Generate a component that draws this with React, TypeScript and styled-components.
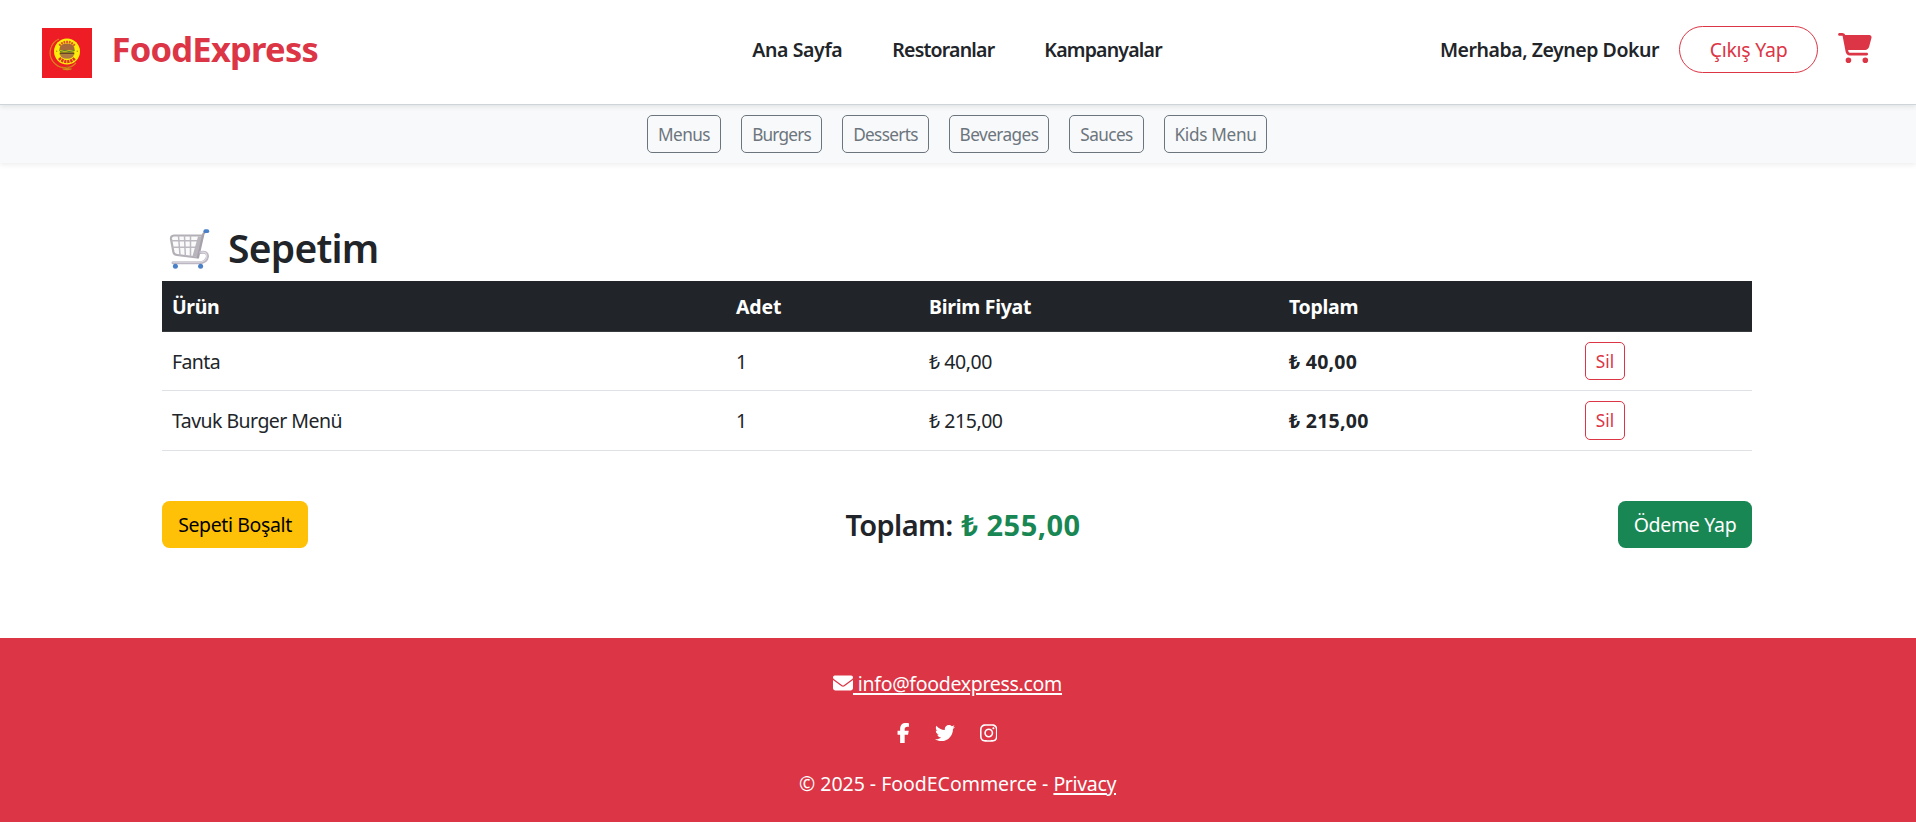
import React from 'react';
import styled, { createGlobalStyle } from 'styled-components';
import { FaCartShopping, FaEnvelope, FaFacebookF, FaInstagram, FaTwitter } from 'react-icons/fa6';

const GlobalStyle = createGlobalStyle`
  *, *::before, *::after { box-sizing: border-box; }
  body {
    margin: 0;
    background: #fff;
    color: #212529;
    font: 400 19.5px/30px "Noto Sans", "Open Sans", sans-serif;
    overflow: hidden;
  }
`;

const Label = styled.span<{ $track?: number; $drop?: number }>`
  display: inline-block;
  margin-top: ${(p) => p.$drop ?? 1}px;
  margin-bottom: ${(p) => -(p.$drop ?? 1)}px;
  letter-spacing: ${(p) => p.$track ?? -0.4}px;
  white-space: pre;
`;

const Header = styled.header`
  position: relative;
  z-index: 2;
  display: flex;
  align-items: center;
  height: 105px;
  padding: 0 44px 5px 42px;
  background: #fff;
  border-bottom: 1px solid #ced4da;
  box-shadow: 0 2px 5px rgba(0, 0, 0, 0.09);
`;

const Brand = styled.a`
  flex: 1 1 0;
  display: flex;
  align-items: center;
  gap: 19.5px;
  color: #dc3545;
  font-size: 34.5px;
  font-weight: 700;
  line-height: 50px;
`;

const BrandLogo = styled.svg`
  width: 50px;
  height: 50px;
  margin-top: 7px;
`;

const Nav = styled.nav`
  display: flex;
  gap: 50px;
  font-weight: 600;
`;

const Account = styled.div`
  flex: 1 1 0;
  display: flex;
  align-items: center;
  justify-content: flex-end;
  gap: 20px;
  font-weight: 600;
`;

const LogoutButton = styled.button`
  width: 139px;
  height: 47px;
  padding: 0;
  border: 1px solid #dc3545;
  border-radius: 25px;
  background: transparent;
  color: #dc3545;
  font: inherit;
  font-weight: 400;
`;

const CartIcon = styled(FaCartShopping)`
  width: 34px;
  height: 30px;
  margin-top: -3px;
  color: #dc3545;
`;

const CategoryBar = styled.div`
  display: flex;
  justify-content: center;
  gap: 20px;
  height: 58px;
  padding: 10px 2px 0 0;
  background: #f8f9fa;
  box-shadow: 0 2px 5px rgba(0, 0, 0, 0.07);
`;

const SmallButton = styled.button<{ $width: number; $danger?: boolean }>`
  width: ${(p) => p.$width}px;
  height: 38.25px;
  padding: 0;
  border: 1px solid ${(p) => (p.$danger ? '#dc3545' : '#6c757d')};
  border-radius: 5px;
  background: transparent;
  color: ${(p) => (p.$danger ? '#dc3545' : '#6c757d')};
  font: inherit;
  font-size: 17.2px;
  line-height: 26px;
`;

const Main = styled.main`
  width: 1592px;
  margin: 0 auto;
  padding: 60px 2px 90px 0;
`;

const Title = styled.h2`
  display: flex;
  align-items: center;
  gap: 17px;
  margin: 0 0 10px;
  padding-left: 5px;
  font-size: 39px;
  font-weight: 560;
  line-height: 48px;
`;

const TitleCart = styled.svg`
  width: 44px;
  height: 42px;
  margin: 5px 0 1px;
`;

const Table = styled.div`
  display: flex;
  flex-direction: column;
`;

const Row = styled.div<{ $head?: boolean }>`
  display: grid;
  grid-template-columns: 564px 193px 360px 296px 177px;
  align-items: center;
  padding: 10px 0;
  border-bottom: 1px solid ${(p) => (p.$head ? '#373b3e' : '#dee2e6')};
  ${(p) => p.$head && 'background: #212529; color: #fff; font-weight: 700;'}
`;

const Cell = styled.div<{ $strong?: boolean }>`
  display: flex;
  padding: 0 10px;
  ${(p) => p.$strong && 'font-weight: 700;'}
`;

const Summary = styled.div`
  display: flex;
  justify-content: space-between;
  align-items: center;
  margin-top: 50px;
`;

const ActionButton = styled.button<{ $width: number; $tone: 'warning' | 'success' }>`
  width: ${(p) => p.$width}px;
  height: 47px;
  padding: 0;
  border: 0;
  border-radius: 7.5px;
  background: ${(p) => (p.$tone === 'warning' ? '#ffc107' : '#198754')};
  color: ${(p) => (p.$tone === 'warning' ? '#000' : '#fff')};
  font: inherit;
`;

const Total = styled.h4`
  display: flex;
  gap: 9px;
  margin: 0;
  font-size: 29px;
  font-weight: 560;
  line-height: 36px;
`;

const TotalAmount = styled.span`
  color: #198754;
  font-weight: 700;
`;

const Footer = styled.footer`
  display: flex;
  flex-direction: column;
  align-items: center;
  height: 184px;
  padding-top: 30px;
  background: #dc3545;
  color: #fff;
`;

const Mail = styled.a`
  display: flex;
  align-items: center;
  margin-right: 21px;
`;

const Underlined = styled(Label)`
  text-decoration: underline;
  text-decoration-thickness: 2px;
  text-underline-offset: 2px;
`;

const Social = styled.div`
  display: flex;
  align-items: center;
  gap: 25px;
  margin: 20px 22px 20px 0;
  height: 30px;
`;

const Glyph = styled.span<{ $width: number }>`
  display: flex;
  svg {
    width: ${(p) => p.$width}px;
    height: 20px;
  }
`;

const Copyright = styled.p`
  display: flex;
  margin: 0 1px 0 0;
`;

const Logo = () => (
  <BrandLogo viewBox="0 0 50 50">
    <rect width="50" height="50" fill="#ee1c24" />
    <path d="M17 11 A15 15 0 1 0 34 35" fill="none" stroke="#d9821b" strokeWidth="1.2" />
    <path d="M20 40.5 Q25 39.5 30 40.5 L29 41.8 Q25 42.6 21 41.8Z" fill="#e8921a" stroke="#a0611a" strokeWidth=".4" />
    <path d="M25 37v3" stroke="#a0611a" strokeWidth="1" />
    <circle cx="25" cy="23.5" r="13" fill="#fdee0a" />
    <path d="M17.4 17.6 A9.7 9.7 0 0 1 32.6 17.6" fill="none" stroke="#e0522a" strokeWidth="2.5" strokeDasharray="1.8 .8" />
    <path d="M17.2 30 A10.2 10.2 0 0 0 32.8 30" fill="none" stroke="#dc3424" strokeWidth="3.2" strokeDasharray="2.3 .7" />
    <circle cx="14.7" cy="23.3" r=".7" fill="#b58a13" />
    <circle cx="35.3" cy="23.3" r=".7" fill="#b58a13" />
    <path d="M17.3 22 Q17.3 15.5 25 15.5 Q32.7 15.5 32.7 22Z" fill="#a5693a" />
    <path d="M17 22 h16 l-1.5 2.5 h-13Z" fill="#5d8b2b" />
    <path d="M18 22.3 L23 23.8 L27 22.3 L32 23.5" fill="none" stroke="#f2c21c" strokeWidth=".8" />
    <path d="M17.7 24.5 h14.6 v2 h-14.6Z" fill="#6b4426" />
    <path d="M18 26.2 h14 Q31.5 30.5 25 30.8 Q18.5 30.5 18 26.2Z" fill="#b07a45" />
  </BrandLogo>
);

const ShoppingCart = () => (
  <TitleCart viewBox="0 0 44 42" fill="none" strokeLinecap="round" strokeLinejoin="round">
    <path d="M7 7.5 H35.5 L30 29.5 L10 27 Q7 26.7 6.4 24 L4 11 Q3.6 7.8 7 7.5Z" fill="#fafafa" stroke="#b3afb6" strokeWidth="2.2" />
    <path d="M5 12.8 H33 M6 19.2 H31 M11.5 8 L13 27 M17.5 8 L18.3 27.5 M23.5 8 V28" stroke="#bdb9c0" strokeWidth="1.5" />
    <path d="M31 8.5 L25.5 28 L30 29 L35 8.5Z" fill="#b9b5bc" />
    <path d="M39 3.5 L36.5 5.5 L31 29.5" stroke="#a6a1aa" strokeWidth="2.2" />
    <path d="M33.5 24.5 Q40.5 23 40.5 28.5 Q39.5 34.8 32 34.8 H6" stroke="#bdb7c4" strokeWidth="3" />
    <path d="M34 24.2 Q39.8 23.2 39.8 28.5 Q38.8 34 32 34.2 H6" stroke="#dcd9df" strokeWidth="1.2" />
    <path d="M38.3 3.2 h2" stroke="#4a80c8" strokeWidth="3.8" />
    <circle cx="8.4" cy="38.3" r="2.5" fill="#4a80c8" />
    <circle cx="33.6" cy="38.3" r="2.5" fill="#4a80c8" />
  </TitleCart>
);

const categories = [
  { name: 'Menus', width: 74, track: -0.6 },
  { name: 'Burgers', width: 81, track: -0.8 },
  { name: 'Desserts', width: 87, track: -0.65 },
  { name: 'Beverages', width: 100, track: -0.55 },
  { name: 'Sauces', width: 75, track: -0.6 },
  { name: 'Kids Menu', width: 103, track: -0.32 },
];

const items = [
  { name: 'Fanta', track: -0.6, qty: 1, price: '₺ 40,00' },
  { name: 'Tavuk Burger Menü', track: -0.54, qty: 1, price: '₺ 215,00' },
];

export default function App() {
  return (
    <>
      <GlobalStyle />
      <Header>
        <Brand>
          <Logo />
          <Label $track={-0.76} $drop={-1}>FoodExpress</Label>
        </Brand>
        <Nav>
          <Label $track={-0.38} $drop={0}>Ana Sayfa</Label>
          <Label $track={-0.8} $drop={0}>Restoranlar</Label>
          <Label $track={-0.8} $drop={0}>Kampanyalar</Label>
        </Nav>
        <Account>
          <Label $track={-0.46} $drop={0}>Merhaba, Zeynep Dokur</Label>
          <LogoutButton><Label $track={-0.28} $drop={0}>Çıkış Yap</Label></LogoutButton>
          <CartIcon />
        </Account>
      </Header>
      <CategoryBar>
        {categories.map((c) => (
          <SmallButton key={c.name} $width={c.width}>
            <Label $track={c.track}>{c.name}</Label>
          </SmallButton>
        ))}
      </CategoryBar>
      <Main>
        <Title>
          <ShoppingCart />
          <Label $track={-0.75}>Sepetim</Label>
        </Title>
        <Table>
          <Row $head>
            <Cell><Label>Ürün</Label></Cell>
            <Cell><Label $track={-0.15}>Adet</Label></Cell>
            <Cell><Label $track={-0.28}>Birim Fiyat</Label></Cell>
            <Cell><Label $track={-0.28}>Toplam</Label></Cell>
            <Cell />
          </Row>
          {items.map((item) => (
            <Row key={item.name}>
              <Cell><Label $track={item.track}>{item.name}</Label></Cell>
              <Cell><Label $track={0}>{item.qty}</Label></Cell>
              <Cell><Label $track={-0.46}>{item.price}</Label></Cell>
              <Cell $strong><Label $track={0.25}>{item.price}</Label></Cell>
              <Cell>
                <SmallButton $width={40} $danger><Label $track={0}>Sil</Label></SmallButton>
              </Cell>
            </Row>
          ))}
        </Table>
        <Summary>
          <ActionButton $width={146} $tone="warning"><Label $track={-0.38}>Sepeti Boşalt</Label></ActionButton>
          <Total>
            <Label $track={-0.65}>Toplam:</Label>
            <TotalAmount><Label $track={0.46}>₺ 255,00</Label></TotalAmount>
          </Total>
          <ActionButton $width={134} $tone="success"><Label $track={-0.32}>Ödeme Yap</Label></ActionButton>
        </Summary>
      </Main>
      <Footer>
        <Mail>
          <Glyph $width={20}><FaEnvelope /></Glyph>
          <Underlined $track={-0.3}> info@foodexpress.com</Underlined>
        </Mail>
        <Social>
          <Glyph $width={12.5}><FaFacebookF /></Glyph>
          <Glyph $width={20}><FaTwitter /></Glyph>
          <Glyph $width={17.5}><FaInstagram /></Glyph>
        </Social>
        <Copyright>
          <Label $track={-0.02}>© 2025 - FoodECommerce - </Label>
          <Underlined $track={-0.35}>Privacy</Underlined>
        </Copyright>
      </Footer>
    </>
  );
}
